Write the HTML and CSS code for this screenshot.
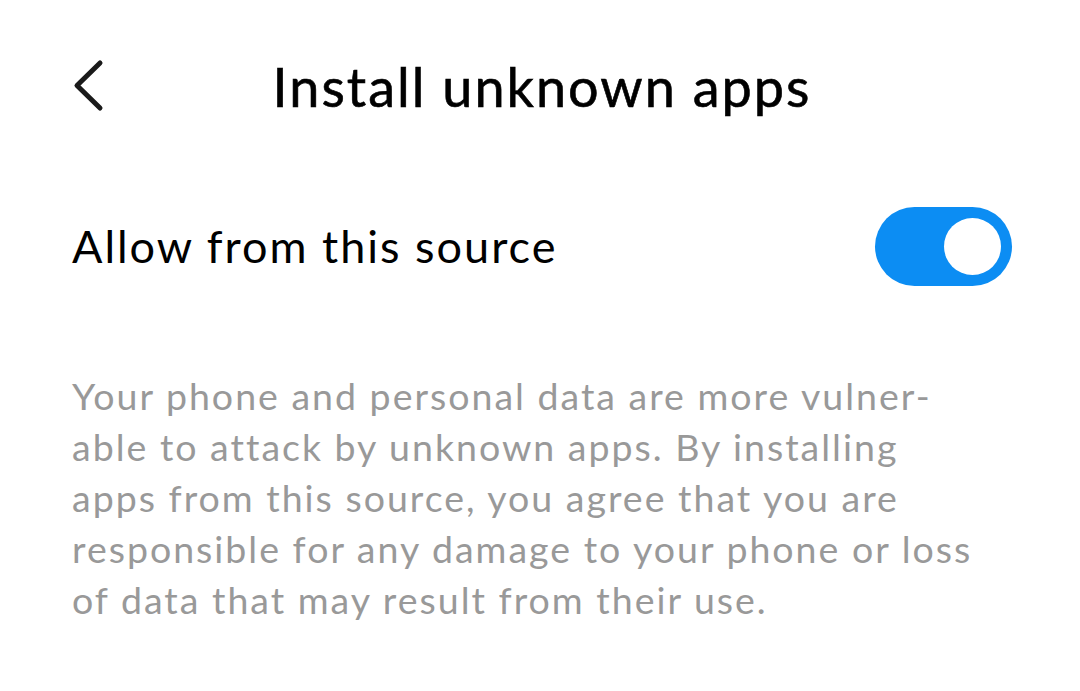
FILE: index.html
```html
<!DOCTYPE html>
<html>
<head>
<meta charset="utf-8">
<link rel="stylesheet" href="styles.css">
</head>
<body>
<div class="screen">
  <header class="topbar">
    <div class="back">
      <svg width="40" height="60" viewBox="0 0 40 60"><path d="M28 7 L5 29.5 L28 52" fill="none" stroke="#1a1a1a" stroke-width="5" stroke-linecap="round" stroke-linejoin="round"/></svg>
    </div>
    <h1 class="title">Install unknown apps</h1>
    <div></div>
  </header>
  <div class="row">
    <span class="label">Allow from this source</span>
    <div class="switch"><div class="knob"></div></div>
  </div>
  <p class="desc">
    <span class="line">Your phone and personal data are more vulner-</span>
    <span class="line">able to attack by unknown apps. By installing</span>
    <span class="line">apps from this source, you agree that you are</span>
    <span class="line">responsible for any damage to your phone or loss</span>
    <span class="line">of data that may result from their use.</span>
  </p>
</div>
</body>
</html>
```
FILE: styles.css
```css
html, body { margin: 0; padding: 0; background: #fff; }
body { width: 1080px; height: 691px; overflow: hidden; font-family: Lato, "Open Sans", sans-serif; }
.screen { padding: 0 68px 0 72px; }
.topbar { display: grid; grid-template-columns: 1fr auto 1fr; align-items: center; height: 176px; }
.back { width: 40px; height: 60px; align-self: start; margin-top: 56px; }
.back svg { display: block; }
.title { margin: 0 0 4px; font-size: 54px; font-weight: 400; letter-spacing: 2px; color: #000; white-space: nowrap; -webkit-text-stroke: 0.6px #000; }
.row { display: flex; align-items: center; justify-content: space-between; height: 140px; }
.label { font-size: 45px; letter-spacing: 2px; color: #000; }
.switch { width: 137px; height: 79px; border-radius: 40px; background: #0c8df3; position: relative; }
.knob { position: absolute; width: 57px; height: 57px; border-radius: 50%; background: #fff; right: 11px; top: 11px; }
.desc { margin: 0; padding-top: 54px; font-size: 37.5px; line-height: 51px; letter-spacing: 2px; color: #999; }
.line { display: block; white-space: nowrap; }
```
